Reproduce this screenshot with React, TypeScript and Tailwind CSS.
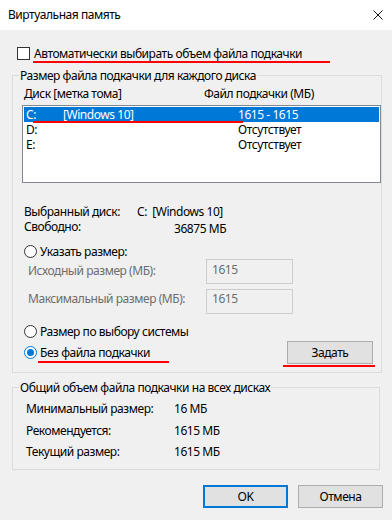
import React from 'react';

const FONT = { fontFamily: '"Noto Sans", "Liberation Sans", sans-serif' };

type Drive = { letter: string; label: string; size: string; selected?: boolean };

const drives: Drive[] = [
  { letter: 'C:', label: '[Windows 10]', size: '1615 - 1615', selected: true },
  { letter: 'D:', label: '', size: 'Отсутствует' },
  { letter: 'E:', label: '', size: 'Отсутствует' },
];

const Radio = ({ checked }: { checked?: boolean }) => (
  <span
    className={
      'flex h-[13px] w-[13px] shrink-0 items-center justify-center rounded-full border bg-white ' +
      (checked ? 'border-[#0078d7]' : 'border-[#333333]')
    }
  >
    {checked && <span className="h-[7px] w-[7px] rounded-full bg-[#0078d7]" />}
  </span>
);

const GroupBox = ({
  title,
  className,
  children,
}: {
  title: string;
  className?: string;
  children: React.ReactNode;
}) => (
  <fieldset className={'ml-[12px] w-[368px] border border-[#dcdcdc] ' + (className ?? '')}>
    <legend className="ml-[6px] px-[1px] leading-[15px]">{title}</legend>
    {children}
  </fieldset>
);

export default function App() {
  return (
    <div
      className="relative h-[520px] w-[392px] overflow-hidden bg-[#f0f0f0] text-[12px] leading-[14px] tracking-[-0.45px] text-black"
      style={FONT}
    >
      {/* Title bar */}
      <div className="flex h-[30px] items-center justify-between bg-white pl-[8px] pr-[9px]">
        <span>Виртуальная память</span>
        <svg width="10" height="10" viewBox="0 0 10 10" className="mb-[1px]">
          <path d="M0.5 0.5 L9.5 9.5 M9.5 0.5 L0.5 9.5" stroke="#111" strokeWidth="1" />
        </svg>
      </div>

      {/* Auto checkbox */}
      <div className="mt-[16px] flex h-[15px] items-center">
        <span className="ml-[17px] h-[13px] w-[13px] border border-[#333333] bg-white" />
        <span className="ml-[4px]">Автоматически выбирать объем файла подкачки</span>
      </div>

      {/* Per-disk group */}
      <GroupBox title="Размер файла подкачки для каждого диска" className="mt-[7px] pb-[8px]">
        <div className="mt-[3px] flex h-[15px] items-center pl-[11px]">
          <span className="w-[180px]">Диск [метка тома]</span>
          <span>Файл подкачки (МБ)</span>
        </div>

        <div className="ml-[9px] mt-[4px] h-[78px] w-[359px] border border-[#828790] bg-white p-px">
          {drives.map((d) => (
            <div
              key={d.letter}
              className={
                'flex h-[15px] items-center pl-[2px] ' +
                (d.selected ? 'bg-[#0078d7] text-white' : '')
              }
            >
              <span className="w-[37px]">{d.letter}</span>
              <span className="w-[175px]">{d.label}</span>
              <span>{d.size}</span>
            </div>
          ))}
        </div>

        <div className="mt-[21px] pl-[11px]">
          <div className="flex h-[15px] items-center">
            <span className="w-[113px]">Выбранный диск:</span>
            <span className="whitespace-pre">C:  [Windows 10]</span>
          </div>
          <div className="flex h-[15px] items-center">
            <span className="w-[150px]">Свободно:</span>
            <span className="pt-[5px]">36875 МБ</span>
          </div>
        </div>

        <div className="mt-[10px] flex h-[15px] items-center pl-[11px]">
          <Radio />
          <span className="ml-[3px]">Указать размер:</span>
        </div>

        <div className="flex items-start pl-[15px] text-[#6d6d6d]">
          <span className="mt-[5px] w-[178px]">Исходный размер (МБ):</span>
          <div className="h-[25px] w-[87px] border border-[#cccccc] pl-[5px] pt-[3px]">1615</div>
        </div>
        <div className="mt-[5px] flex items-start pl-[15px] text-[#6d6d6d]">
          <span className="mt-[3px] w-[178px]">Максимальный размер (МБ):</span>
          <div className="h-[25px] w-[87px] border border-[#cccccc] pl-[5px] pt-[2px]">1615</div>
        </div>

        <div className="mt-[10px] flex h-[15px] items-center pl-[11px]">
          <Radio />
          <span className="ml-[3px]">Размер по выбору системы</span>
        </div>

        <div className="mt-[2px] flex h-[23px] items-center pl-[11px] pr-[8px]">
          <Radio checked />
          <span className="ml-[3px]">Без файла подкачки</span>
          <button className="ml-auto h-[23px] w-[86px] border border-[#adadad] bg-[#e1e1e1]">
            Задать
          </button>
        </div>
      </GroupBox>

      {/* Totals group */}
      <GroupBox title="Общий объем файла подкачки на всех дисках" className="mt-[7px] pb-[10px]">
        <div className="pl-[13px]">
          <div className="mt-[6px] flex h-[15px] items-center">
            <span className="w-[148px]">Минимальный размер:</span>
            <span>16 МБ</span>
          </div>
          <div className="mt-[7px] flex h-[15px] items-center">
            <span className="w-[148px]">Рекомендуется:</span>
            <span>1615 МБ</span>
          </div>
          <div className="mt-[6px] flex h-[15px] items-center">
            <span className="w-[148px]">Текущий размер:</span>
            <span>1615 МБ</span>
          </div>
        </div>
      </GroupBox>

      {/* Dialog buttons */}
      <div className="mt-[15px] flex justify-end gap-[10px] pr-[9px]">
        <button className="h-[23px] w-[85px] border-2 border-[#0078d7] bg-[#e1e1e1]">OK</button>
        <button className="h-[23px] w-[85px] border border-[#adadad] bg-[#e1e1e1]">Отмена</button>
      </div>

      {/* Red annotation marks */}
      <div className="absolute left-[33px] top-[61px] h-[2px] w-[297px] bg-[#ff0000]" />
      <div className="absolute left-[33px] top-[121px] h-[2px] w-[210px] bg-[#ff0000]" />
      <div className="absolute left-[38px] top-[361px] h-[2px] w-[131px] bg-[#ff0000]" />
      <div className="absolute left-[283px] top-[365px] h-[2px] w-[92px] bg-[#ff0000]" />
    </div>
  );
}
